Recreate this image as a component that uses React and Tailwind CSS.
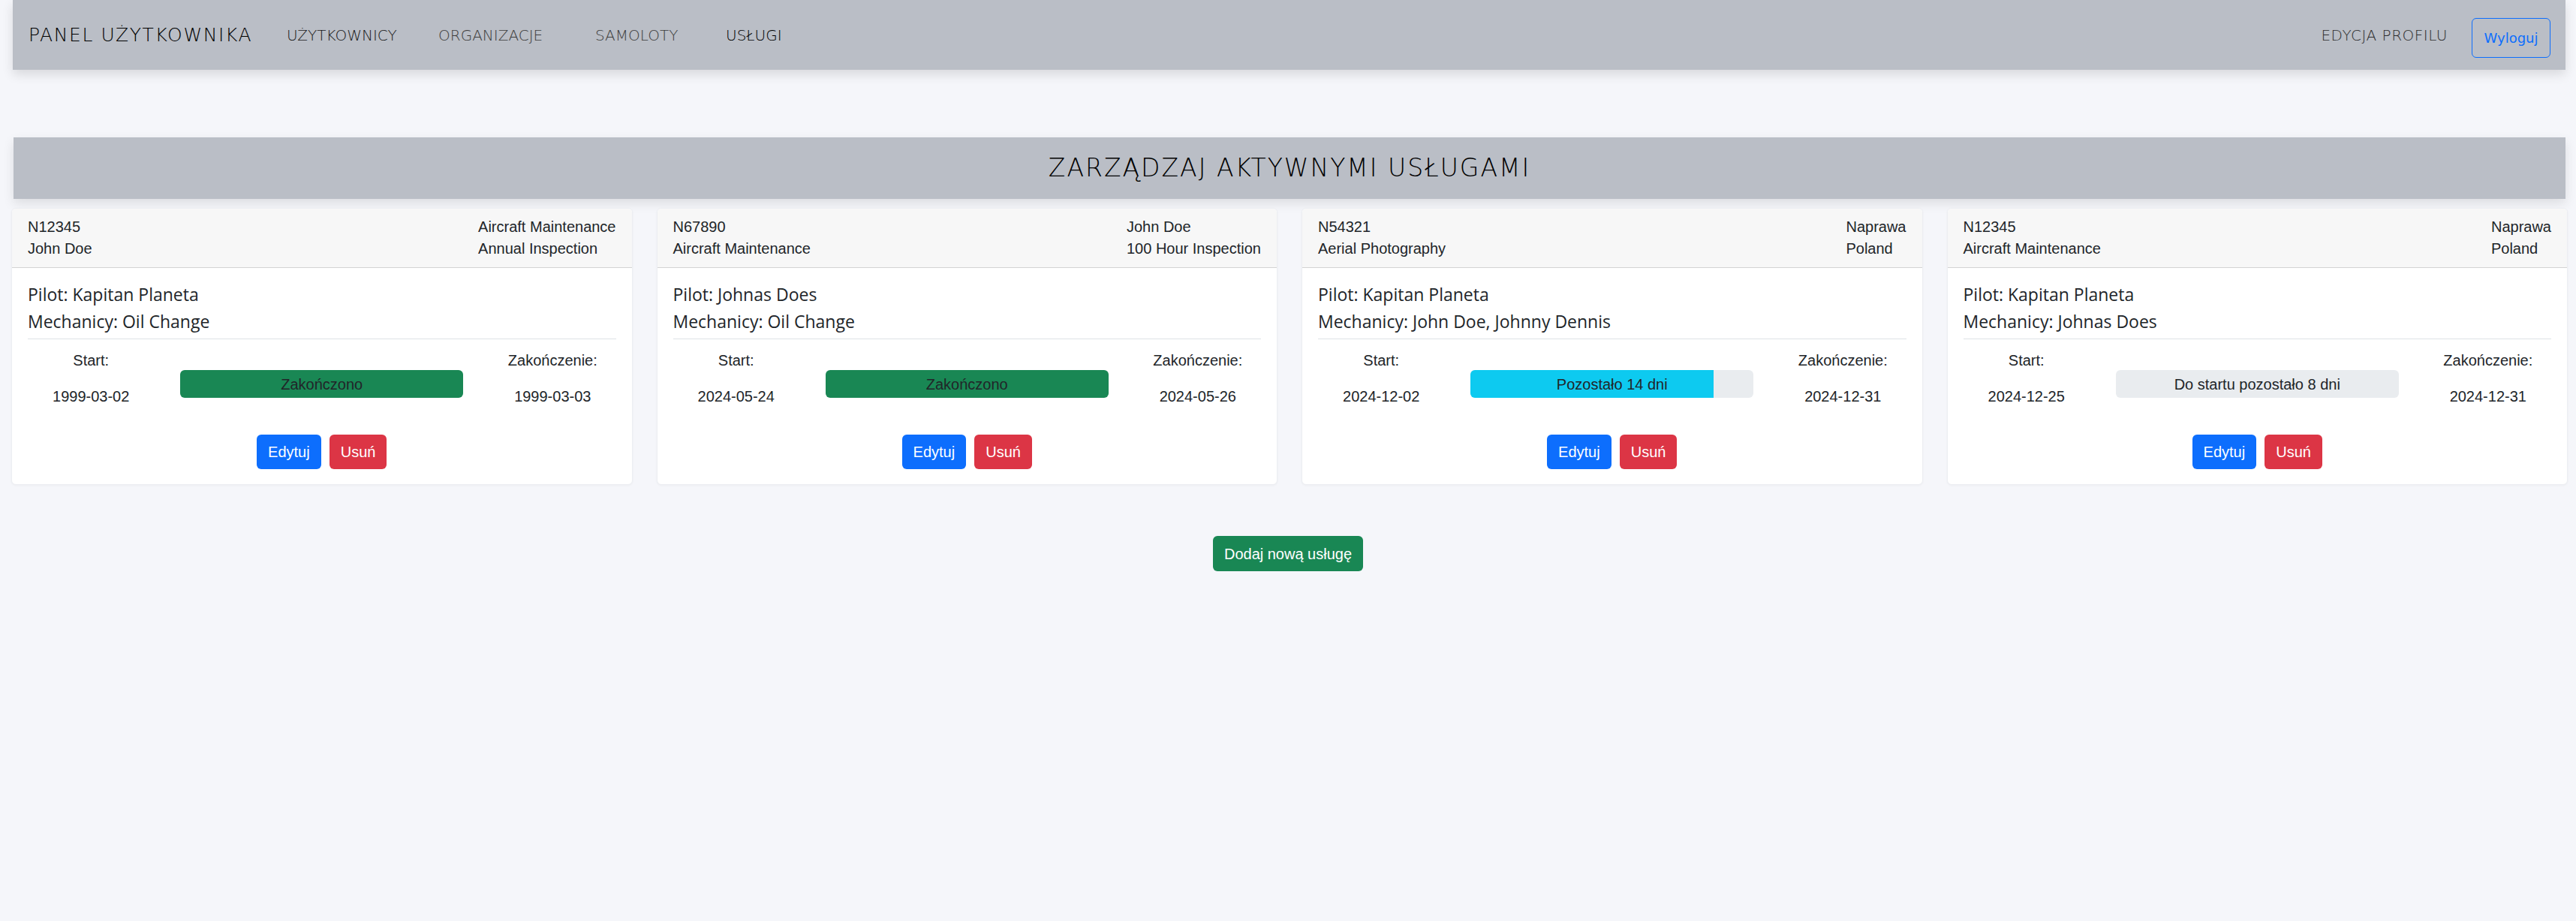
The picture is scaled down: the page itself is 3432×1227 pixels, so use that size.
import React from 'react';

const HEAD = { fontFamily: '"DejaVu Sans", "Open Sans", sans-serif' };
const SOFT = { fontFamily: '"Open Sans", "Noto Sans", sans-serif' };
const BODY = { fontFamily: '"Liberation Sans", Arial, sans-serif' };

const services = [
  {
    reg: 'N12345', sub: 'John Doe', right1: 'Aircraft Maintenance', right2: 'Annual Inspection',
    pilot: 'Kapitan Planeta', mech: 'Oil Change',
    start: '1999-03-02', end: '1999-03-03', kind: 'done', label: 'Zakończono',
  },
  {
    reg: 'N67890', sub: 'Aircraft Maintenance', right1: 'John Doe', right2: '100 Hour Inspection',
    pilot: 'Johnas Does', mech: 'Oil Change',
    start: '2024-05-24', end: '2024-05-26', kind: 'done', label: 'Zakończono',
  },
  {
    reg: 'N54321', sub: 'Aerial Photography', right1: 'Naprawa', right2: 'Poland',
    pilot: 'Kapitan Planeta', mech: 'John Doe, Johnny Dennis',
    start: '2024-12-02', end: '2024-12-31', kind: 'running', label: 'Pozostało 14 dni', pct: 86,
  },
  {
    reg: 'N12345', sub: 'Aircraft Maintenance', right1: 'Naprawa', right2: 'Poland',
    pilot: 'Kapitan Planeta', mech: 'Johnas Does',
    start: '2024-12-25', end: '2024-12-31', kind: 'waiting', label: 'Do startu pozostało 8 dni',
  },
];

function Progress({ s }) {
  if (s.kind === 'done') {
    return (
      <div className="h-[37px] rounded-[6px] bg-[#198754] flex items-center justify-center text-[20px] text-[#212529]">
        {s.label}
      </div>
    );
  }
  if (s.kind === 'running') {
    return (
      <div className="relative h-[37px] rounded-[6px] bg-[#e9ecef] overflow-hidden">
        <div className="h-full bg-[#0dcaf0]" style={{ width: `${s.pct}%` }} />
        <div className="absolute inset-0 flex items-center justify-center text-[20px] text-[#212529]">
          {s.label}
        </div>
      </div>
    );
  }
  return (
    <div className="h-[37px] rounded-[6px] bg-[#e9ecef] flex items-center justify-center text-[20px] text-[#212529]">
      {s.label}
    </div>
  );
}

function ServiceCard({ s }) {
  return (
    <div className="bg-white rounded-[6px] border border-[#eceef2] shadow-[0_1px_3px_rgba(0,0,0,0.04)] overflow-hidden text-[#212529]" style={BODY}>
      <div className="bg-[#f7f7f7] border-b border-[#d3d3d3] px-[21px] py-[10px] flex justify-between text-[20px] leading-[29px]">
        <div>
          <div>{s.reg}</div>
          <div>{s.sub}</div>
        </div>
        <div>
          <div>{s.right1}</div>
          <div>{s.right2}</div>
        </div>
      </div>
      <div className="px-[21px] pt-[17px] pb-[20px]">
        <div style={SOFT} className="text-[23px] leading-[36px] text-[#212529]">
          <div>Pilot: {s.pilot}</div>
          <div>Mechanicy: {s.mech}</div>
        </div>
        <div className="mt-[5px] border-t border-[#dee2e6]" />
        <div className="mt-[13px] flex items-start text-[20px] leading-[30px]">
          <div className="w-[21.5%] text-center">
            <div>Start:</div>
            <div className="mt-[18px]">{s.start}</div>
          </div>
          <div className="flex-1 px-[35px] pt-[28px]">
            <Progress s={s} />
          </div>
          <div className="w-[21.5%] text-center">
            <div>Zakończenie:</div>
            <div className="mt-[18px]">{s.end}</div>
          </div>
        </div>
        <div className="mt-[36px] flex justify-center gap-[11px]">
          <button className="h-[46px] px-[15px] rounded-[6px] bg-[#0d6efd] text-white text-[20px]">Edytuj</button>
          <button className="h-[46px] px-[15px] rounded-[6px] bg-[#dc3545] text-white text-[20px]">Usuń</button>
        </div>
      </div>
    </div>
  );
}

export default function App() {
  return (
    <div className="min-h-screen bg-[#f5f6fa] pb-10">
      <nav className="ml-[17px] mr-[14px] h-[93px] bg-[#babec6] shadow-[0_6px_14px_rgba(0,0,0,0.12)] flex items-center pl-[21px] pr-[20px]" style={HEAD}>
        <div className="w-[344px] text-[25px] font-light text-black tracking-[1.6px]">PANEL UŻYTKOWNIKA</div>
        <div className="w-[202px] text-[20px] font-light text-[#1a1a1a]">UŻYTKOWNICY</div>
        <div className="w-[209px] text-[20px] font-light text-[#3d3d3d]">ORGANIZACJE</div>
        <div className="w-[174px] text-[20px] font-light text-[#3d3d3d]">SAMOLOTY</div>
        <div className="text-[20px] font-light text-black">USŁUGI</div>
        <div className="ml-auto flex items-center gap-[32px]">
          <span className="text-[20px] font-light text-[#2e2e2e] tracking-[0.5px]">EDYCJA PROFILU</span>
          <button className="mt-[8px] h-[53px] w-[105px] rounded-[6px] border border-[#0d6efd] text-[#0d6efd] text-[18px]">Wyloguj</button>
        </div>
      </nav>

      <div className="mt-[90px] ml-[18px] mr-[14px] h-[82px] bg-[#babec6] shadow-[0_6px_14px_rgba(0,0,0,0.1)] flex items-center justify-center" style={HEAD}>
        <h1 className="text-[33px] font-light text-black tracking-[2px]">ZARZĄDZAJ AKTYWNYMI USŁUGAMI</h1>
      </div>

      <div className="mt-[12px] ml-[15px] mr-[11px] grid grid-cols-4 gap-[32px]">
        {services.map((s, i) => (
          <ServiceCard key={i} s={s} />
        ))}
      </div>

      <div className="mt-[68px] flex justify-center" style={BODY}>
        <button className="h-[47px] px-[15px] rounded-[6px] bg-[#198754] text-white text-[20px]">Dodaj nową usługę</button>
      </div>
    </div>
  );
}
